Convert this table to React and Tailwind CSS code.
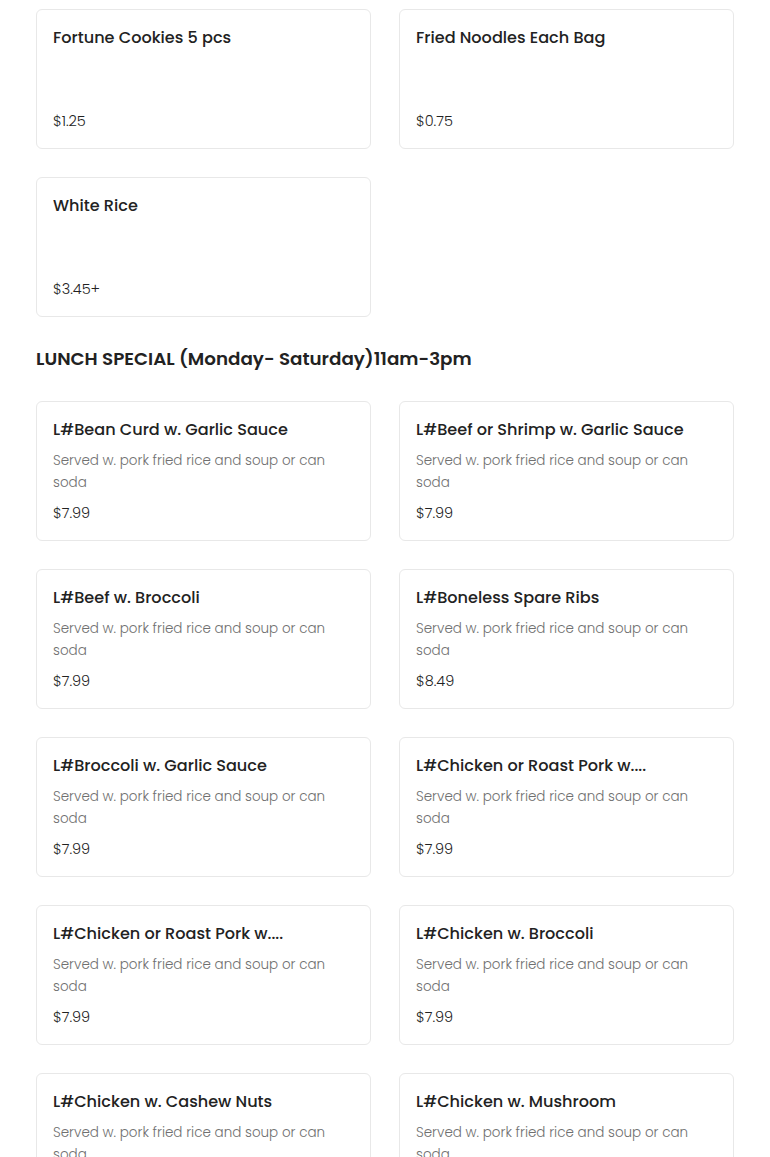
import React from "react";

const top = [
  { name: "Fortune Cookies 5 pcs", price: "$1.25" },
  { name: "Fried Noodles Each Bag", price: "$0.75" },
  { name: "White Rice", price: "$3.45+" },
];

const desc = "Served w. pork fried rice and soup or can soda";

const lunch = [
  { name: "L#Bean Curd w. Garlic Sauce", price: "$7.99" },
  { name: "L#Beef or Shrimp w. Garlic Sauce", price: "$7.99" },
  { name: "L#Beef w. Broccoli", price: "$7.99" },
  { name: "L#Boneless Spare Ribs", price: "$8.49" },
  { name: "L#Broccoli w. Garlic Sauce", price: "$7.99" },
  { name: "L#Chicken or Roast Pork w....", price: "$7.99" },
  { name: "L#Chicken or Roast Pork w....", price: "$7.99" },
  { name: "L#Chicken w. Broccoli", price: "$7.99" },
  { name: "L#Chicken w. Cashew Nuts", price: "$7.99" },
  { name: "L#Chicken w. Mushroom", price: "$7.99" },
];

function Card({ name, description, price }) {
  return (
    <div className="h-[140px] flex flex-col rounded-md border border-[#e8e8e8] bg-white px-4 pt-4 pb-4">
      <div className="text-[16.1px] leading-[24px] font-medium text-[#222222] whitespace-nowrap overflow-hidden">
        {name}
      </div>
      {description && (
        <div className="mt-[8px] text-[13.5px] leading-[22px] font-light text-[#707070] pr-2">
          {description}
        </div>
      )}
      <div className="mt-auto text-[14.5px] leading-[22px] font-light text-[#222222]">{price}</div>
    </div>
  );
}

export default function App() {
  return (
    <div
      className="bg-white min-h-[1157px] px-9 pt-[9px]"
      style={{ fontFamily: "Poppins, Inter, 'Noto Sans', sans-serif" }}
    >
      <div className="grid grid-cols-2 gap-7">
        {top.map((it, i) => (
          <Card key={i} name={it.name} price={it.price} />
        ))}
      </div>
      <h2 className="mt-[28px] mb-[28px] text-[18.3px] leading-[28px] font-semibold text-[#222222]">
        LUNCH SPECIAL (Monday- Saturday)11am-3pm
      </h2>
      <div className="grid grid-cols-2 gap-7">
        {lunch.map((it, i) => (
          <Card key={i} name={it.name} description={desc} price={it.price} />
        ))}
      </div>
    </div>
  );
}
